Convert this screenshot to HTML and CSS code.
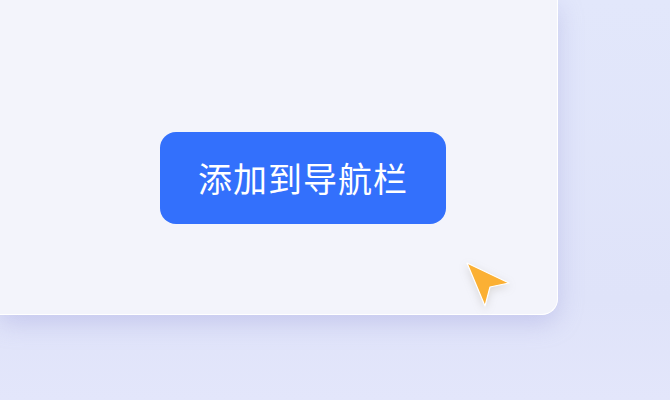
FILE: index.html
```html
<!DOCTYPE html>
<html lang="zh-CN">
<head>
    <meta charset="UTF-8">
    <meta name="viewport" content="width=device-width, initial-scale=1.0">
    <title>添加到导航栏</title>
    <link rel="stylesheet" href="styles.css">
</head>
<body>
    <div class="scene">
        <div class="panel">
            <button class="nav-button">添加到导航栏</button>
        </div>

        <!-- 鼠标指针 -->
        <svg class="cursor" width="50" height="52" viewBox="0 0 50 52">
            <path d="M4 4 L46 24 L27 28 L22 47 Z" fill="#fbb034" stroke="#ffffff" stroke-width="1.2" stroke-linejoin="round"/>
        </svg>
    </div>
</body>
</html>
```

FILE: styles.css
```css
body {
    margin: 0;
    font-family: "Noto Sans CJK SC", "Noto Sans", sans-serif;
    background: linear-gradient(180deg, #e2e7fb 0%, #dfe3f9 75%, #e3e6fb 100%);
    width: 670px;
    height: 400px;
    overflow: hidden;
}

.scene {
    position: relative;
    width: 670px;
    height: 400px;
}

.panel {
    box-sizing: border-box;
    width: 558px;
    height: 315px;
    padding: 132px 0 0 160px;
    background: #f3f4fb;
    border-right: 1px solid #ffffff;
    border-bottom: 1px solid #ffffff;
    border-bottom-right-radius: 16px;
    box-shadow: 0 8px 24px rgba(150, 150, 215, 0.35);
}

.nav-button {
    display: flex;
    align-items: center;
    justify-content: center;
    width: 286px;
    height: 92px;
    border: none;
    border-radius: 16px;
    background: #3370fc;
    color: #ffffff;
    font-family: "Noto Sans CJK SC", "Noto Sans", sans-serif;
    font-size: 34px;
    letter-spacing: 1px;
    padding: 0 0 2px 0;
    cursor: pointer;
}

.cursor {
    position: absolute;
    left: 463px;
    top: 259px;
    filter: drop-shadow(0 3px 4px rgba(120, 110, 90, 0.2));
}
```
